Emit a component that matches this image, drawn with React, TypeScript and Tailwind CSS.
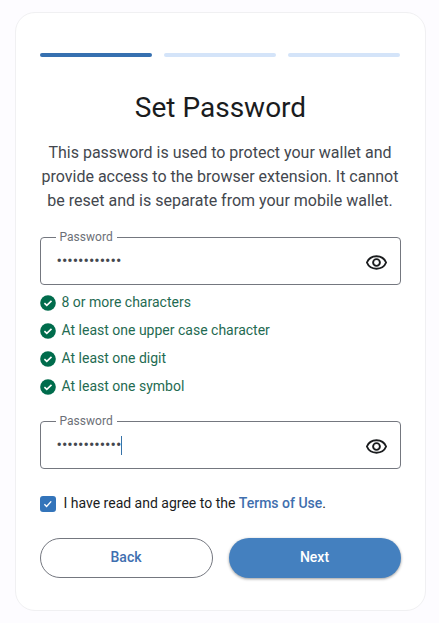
import { useState } from 'react';

const requirements = [
  '8 or more characters',
  'At least one upper case character',
  'At least one digit',
  'At least one symbol',
];

function EyeIcon() {
  return (
    <svg width="23" height="23" viewBox="0 0 23 23" fill="none" stroke="currentColor" strokeWidth="1.9">
      <path d="M1.9 11.5C3.5 7.6 7.2 5.3 11.5 5.3s8 2.3 9.6 6.2c-1.6 3.9-5.3 6.2-9.6 6.2s-8-2.3-9.6-6.2z" strokeLinejoin="round" />
      <circle cx="11.5" cy="11.5" r="3.4" />
    </svg>
  );
}

function PasswordField({ focused = false }: { focused?: boolean }) {
  const [value, setValue] = useState('Abcdefghij1!');

  return (
    <div className="relative flex h-12 items-center rounded border border-[#74777f] pl-[15.5px] pr-3">
      <label className="absolute left-[15px] top-[-9px] bg-white pl-[3.5px] pr-1 text-[12px] leading-4 tracking-[0.02px] text-[#6c6f77]">
        Password
      </label>
      <input
        type="password"
        value={value}
        onChange={(e) => setValue(e.target.value)}
        className="w-full min-w-0 bg-transparent text-[16px] leading-6 text-[#43474e] outline-none"
      />
      {focused && <span className="absolute left-[80px] top-[14px] h-[19px] w-px bg-[#3572a8]" />}
      <button type="button" aria-label="Show password" className="shrink-0 pt-0.5 text-[#1a1c1e]">
        <EyeIcon />
      </button>
    </div>
  );
}

function CheckCircle() {
  return (
    <svg width="16" height="16" viewBox="0 0 16 16" fill="none">
      <circle cx="8" cy="8" r="7.8" fill="#006c4c" />
      <path d="M4.4 8.1l2.4 2.3 4.7-4.5" stroke="#fff" strokeWidth="1.6" />
    </svg>
  );
}

export default function App() {
  return (
    <div className="h-[623px] bg-[#fdfcff] pl-[15px] pt-3 font-['Roboto',sans-serif]">
      <div className="h-[599px] w-[411px] rounded-[20px] border border-[#f0f0f2] bg-white px-6 pt-10">
        <div className="flex gap-3 pr-px">
          <div className="h-1 flex-1 rounded-full bg-[#3670b0]" />
          <div className="h-1 flex-1 rounded-full bg-[#d4e4f9]" />
          <div className="h-1 flex-1 rounded-full bg-[#d4e4f9]" />
        </div>

        <h1 className="mt-[33px] text-center text-[28px] leading-9 text-[#1a1c1e]">Set Password</h1>
        <p className="mt-[15px] pr-px text-center text-[16px] leading-6 text-[#43474e]">
          This password is used to protect your wallet and
          <br />
          provide access to the browser extension. It cannot
          <br />
          be reset and is separate from your mobile wallet.
        </p>

        <div className="mt-6">
          <PasswordField />
        </div>

        <ul className="mt-2 space-y-2">
          {requirements.map((text) => (
            <li key={text} className="flex h-5 items-center gap-[5.5px] text-[14px] leading-5 text-[#1f6b52]">
              <CheckCircle />
              <span className="pb-0.5">{text}</span>
            </li>
          ))}
        </ul>

        <div className="mt-6">
          <PasswordField focused />
        </div>

        <div className="mt-6 flex h-5 items-center gap-[7.5px] text-[14px] leading-5 text-[#1a1c1e]">
          <span className="mt-0.5 flex size-4 items-center justify-center rounded-[3px] bg-[#3374ba]">
            <svg width="16" height="16" viewBox="0 0 16 16" fill="none">
              <path d="M4.4 8.2l2.2 2.2 4.6-5" stroke="#fff" strokeWidth="1.4" />
            </svg>
          </span>
          <p>
            I have read and agree to the{' '}
            <a href="#" className="font-medium text-[#3f6fae]">Terms of Use</a>.
          </p>
        </div>

        <div className="mt-[25px] flex gap-4 text-[14px] font-medium leading-5">
          <button className="h-10 w-[173px] rounded-full border border-[#74777f] pb-0.5 pr-px text-[#3f6fb0]">
            Back
          </button>
          <button className="h-10 flex-1 rounded-full bg-[#4480bf] pb-0.5 pr-px text-white shadow-[0_1px_3px_rgba(0,0,0,0.4)]">
            Next
          </button>
        </div>
      </div>
    </div>
  );
}
